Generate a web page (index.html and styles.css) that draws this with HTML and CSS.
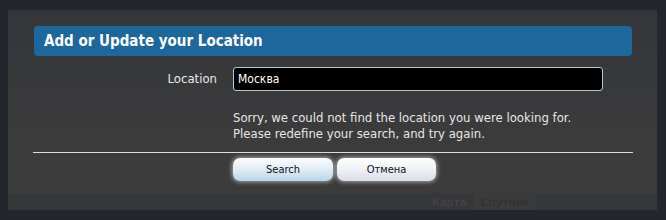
FILE: index.html
```html
<!DOCTYPE html>
<html>
<head>
<meta charset="utf-8">
<link rel="stylesheet" href="styles.css">
</head>
<body>
<div class="panel">
  <div class="titlebar">Add or Update your Location</div>
  <div class="form">
    <label class="label">Location</label>
    <div class="input">Москва</div>
    <div></div>
    <div class="msg">Sorry, we could not find the location you were looking for.<br>Please redefine your search, and try again.</div>
  </div>
  <div class="rule"></div>
  <div class="buttons">
    <div class="btn search">Search</div>
    <div class="btn cancel">Отмена</div>
  </div>
  <div class="footer">
    <span class="tab tab1">Карта</span><span class="tab tab2">Спутник</span>
  </div>
</div>
</body>
</html>
```
FILE: styles.css
```css
html, body { margin: 0; padding: 0; }
body {
  width: 666px;
  height: 220px;
  background: #23262c;
  overflow: hidden;
  font-family: "DejaVu Sans Condensed", "DejaVu Sans", sans-serif;
  color: #e6e6e6;
}
.panel {
  margin: 10px 9px 0 8px;
  height: 200px;
  background: linear-gradient(#34363a, #3b3b3c 60%, #3c3c3c);
  padding-top: 16px;
  box-sizing: border-box;
  display: flex;
  flex-direction: column;
}
.titlebar {
  margin: 0 25px 0 26px;
  height: 30px;
  background: #1e679d;
  border-radius: 4px;
  color: #fff;
  font-weight: bold;
  font-size: 15px;
  line-height: 31px;
  padding-left: 10px;
}
.form {
  display: grid;
  grid-template-columns: 209px 370px;
  column-gap: 16px;
  margin-top: 11px;
}
.label {
  text-align: right;
  font-size: 13px;
  line-height: 24px;
  color: #e8e8e8;
}
.input {
  height: 24px;
  box-sizing: border-box;
  background: #000;
  border: 1px solid #b9c6cf;
  border-radius: 3px;
  color: #fff;
  font-size: 12px;
  line-height: 22px;
  padding-left: 4px;
}
.msg {
  margin-top: 19px;
  font-size: 13px;
  line-height: 16px;
  color: #e6e6e6;
}
.rule {
  margin: 10px 24px 0 25px;
  height: 1px;
  background: #cfe2ec;
}
.buttons {
  display: flex;
  gap: 4px;
  margin: 5px 0 0 225px;
}
.btn {
  height: 23px;
  border-radius: 7px;
  font-size: 11px;
  line-height: 23px;
  text-align: center;
  color: #111;
  box-shadow: 0 0 4px 1px rgba(255,255,255,0.55);
}
.search {
  width: 100px;
  background: linear-gradient(#fbfdfe, #e3eef6 45%, #b9d6ea);
}
.cancel {
  width: 99px;
  background: linear-gradient(#ffffff, #eef0f5 50%, #d9dde8);
}
.footer {
  margin-top: auto;
  height: 17px;
  background: #363739;
  padding-left: 417px;
  display: flex;
  align-items: flex-end;
}
.tab {
  font-family: "DejaVu Sans", sans-serif;
  font-size: 11px;
  line-height: 14px;
  padding: 2px 7px 0;
  color: rgba(120,120,130,0.25);
}
.tab2 { background: rgba(70,70,70,0.3); color: rgba(20,20,20,0.35); }
```
